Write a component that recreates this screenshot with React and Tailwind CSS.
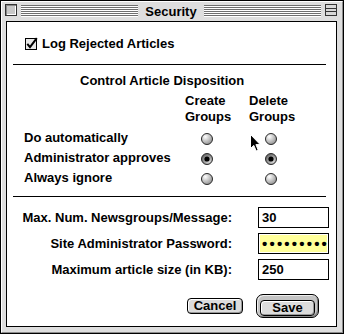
import React from "react";

const Stripes = () => (
  <div className="flex-1 flex flex-col mt-[1px]">
    {[0, 1, 2, 3, 4, 5].map((i) => (
      <div key={i} className="h-[2px] border-t border-[#6f6f6f] bg-white" />
    ))}
  </div>
);

const Radio = ({ on }) => (
  <svg width="12" height="12" viewBox="0 0 12 12" className="block">
    <defs>
      <radialGradient id="rOff" cx="35%" cy="30%" r="75%">
        <stop offset="0%" stopColor="#ffffff" />
        <stop offset="100%" stopColor="#8f8f8f" />
      </radialGradient>
      <radialGradient id="rOn" cx="65%" cy="70%" r="75%">
        <stop offset="0%" stopColor="#e0e0e0" />
        <stop offset="100%" stopColor="#606060" />
      </radialGradient>
    </defs>
    <circle cx="6" cy="6" r="5.5" fill={on ? "url(#rOn)" : "url(#rOff)"} stroke="#2a2a2a" strokeWidth="1" />
    {on && <circle cx="6" cy="6" r="2.6" fill="#000" />}
  </svg>
);

const Checkbox = () => (
  <svg width="13" height="13" viewBox="0 0 13 13" className="block">
    <rect x="0.5" y="1.5" width="11" height="11" fill="#e8e8e8" stroke="#000" />
    <path d="M2.3 6.8 L5 10.2 L11.8 1.2" fill="none" stroke="#000" strokeWidth="2" />
  </svg>
);

const Field = ({ label, children, yellow }) => (
  <div className="flex items-center h-[21px]">
    <div className="w-[225px] text-right leading-[21px]">{label}</div>
    <div className="ml-[26px] w-[71px] h-[21px] border border-black bg-white p-[1px]">
      <div className={`h-full flex items-center pl-[2px] ${yellow ? "bg-[#ffff99]" : "bg-white"}`}>
        {children}
      </div>
    </div>
  </div>
);

const Row = ({ label, a, b }) => (
  <div className="flex items-center h-[20px]">
    <div className="w-[194px] pl-[17px] leading-[20px]">{label}</div>
    <div className="mt-[2px]"><Radio on={a} /></div>
    <div className="ml-[52px] mt-[2px]"><Radio on={b} /></div>
  </div>
);

export default function App() {
  return (
    <div className="w-[344px] h-[334px] border border-black bg-[#dedede] flex flex-col font-['Liberation_Sans',Arial,sans-serif] text-[13px] font-bold text-black">
      <div className="flex-1 flex flex-col border border-white border-r-[#8c8c8c] border-b-[#8c8c8c]">
        {/* title bar */}
        <div className="h-[19px] flex items-start pt-[2px]">
          <div className="ml-[3px] w-[12px] h-[12px] border border-[#333] bg-[#c8c8c8] shadow-[inset_1px_1px_0_#888,inset_-1px_-1px_0_#fff]" />
          <div className="flex-1 flex mx-[4px]">
            <Stripes />
          </div>
          <div className="px-[3px] leading-[15px]">Security</div>
          <div className="flex-1 flex mx-[4px]">
            <Stripes />
          </div>
          <div className="mr-[5px] w-[12px] h-[12px] border border-[#333] bg-[#d8d8d8] flex flex-col">
            <div className="h-[4px] border-b border-[#333]" />
            <div className="h-[3px] border-b border-[#333]" />
          </div>
        </div>

        {/* content */}
        <div className="relative flex-1 ml-[4px] mr-[5px] mb-[5px] border border-black bg-white flex flex-col">
          <div className="mt-[14px] pl-[18px] h-[15px] flex items-center gap-[4px]">
            <Checkbox />
            <span className="leading-[15px]">Log Rejected Articles</span>
          </div>

          <div className="mt-[13px] ml-[6px] w-[313px] h-px bg-black" />

          <div className="mt-[8px] pl-[73px] leading-[15px]">Control Article Disposition</div>

          <div className="mt-[5px] pl-[178px] flex leading-[16px]">
            <div className="w-[64px]">Create<br />Groups</div>
            <div>Delete<br />Groups</div>
          </div>

          <div className="mt-[3px] flex flex-col">
            <Row label="Do automatically" a={false} b={false} />
            <Row label="Administrator approves" a={true} b={true} />
            <Row label="Always ignore" a={false} b={false} />
          </div>

          <div className="mt-[8px] ml-[6px] w-[313px] h-px bg-black" />

          <div className="mt-[10px] flex flex-col gap-[5px]">
            <Field label="Max. Num. Newsgroups/Message:">
              <span>30</span>
            </Field>
            <Field label="Site Administrator Password:" yellow>
              <span className="text-[15px] tracking-[2.2px] leading-none">•••••••••</span>
            </Field>
            <Field label="Maximum article size (in KB):">
              <span>250</span>
            </Field>
          </div>

          <div className="mt-[14px] flex items-center">
            <button className="ml-[180px] w-[56px] h-[16px] rounded-[4px] border border-black bg-[#dcdcdc] shadow-[inset_1px_1px_0_#fff,inset_-1px_-1px_0_#999] leading-[14px] text-center">
              Cancel
            </button>
            <div className="ml-[13px] w-[63px] h-[24px] rounded-[7px] border border-black bg-[#c4c4c4] p-[3px] shadow-[inset_1px_1px_0_#eee,inset_-1px_-1px_0_#888]">
              <button className="w-full h-full rounded-[4px] border border-black bg-[#dcdcdc] shadow-[inset_1px_1px_0_#fff,inset_-1px_-1px_0_#999] leading-[14px] text-center">
                Save
              </button>
            </div>
          </div>

          {/* mouse pointer */}
          <svg className="absolute left-[243px] top-[112px]" width="11" height="18" viewBox="0 0 11 18">
            <path d="M0.5 0.5 L0.5 14.5 L3.8 11.4 L6.2 17 L8.2 16.1 L5.9 10.6 L10.2 10.6 Z" fill="#000" stroke="#fff" strokeWidth="1" />
          </svg>
        </div>
      </div>
    </div>
  );
}
